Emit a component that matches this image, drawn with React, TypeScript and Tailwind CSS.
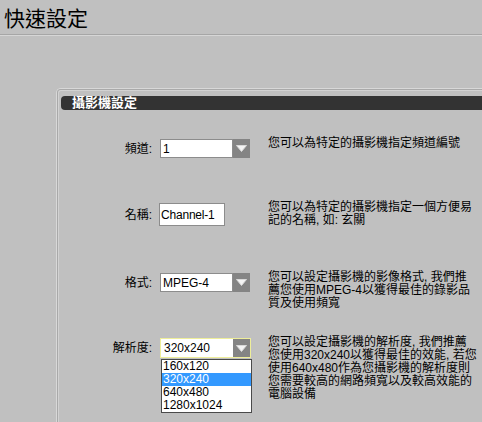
import React from "react";

const CJK = "font-['Liberation_Sans','Noto_Sans_CJK_TC',sans-serif]";

function Arrow() {
  return (
    <svg width="11" height="7" viewBox="0 0 11 7">
      <path d="M0.5 0.5 L10.5 0.5 L5.5 6.5 Z" fill="#f4f4f4" stroke="#d8d8d8" strokeWidth="1" />
    </svg>
  );
}

interface SelectBoxProps {
  value: string;
  focused?: boolean;
}

function SelectBox({ value, focused }: SelectBoxProps) {
  return (
    <div
      className={
        focused
          ? "flex h-[20px] w-[91px] border border-[#eeee9a]"
          : "flex h-[19px] w-[90px]"
      }
    >
      <div
        className={
          focused
            ? "flex flex-1 items-center bg-white pl-[3px] text-[12px] leading-[16px] text-black"
            : "flex flex-1 items-center border border-[#8c8c8c] bg-white pl-[2px] text-[12px] leading-[16px] text-black"
        }
      >
        {value}
      </div>
      <div className="flex w-[17px] items-center justify-center bg-[#848484]">
        <Arrow />
      </div>
    </div>
  );
}

interface RowProps {
  label: string;
  control: React.ReactNode;
  desc: React.ReactNode;
  height: string;
}

function Row({ label, control, desc, height }: RowProps) {
  return (
    <div className={`flex items-start ${height}`}>
      <div className="flex items-center">
        <span className="w-[94px] pr-[1px] text-right text-[12px] leading-[14px] text-black">
          {label}
        </span>
        <div className="ml-[7px] w-[92px]">{control}</div>
      </div>
      <p className="-mt-[2px] ml-[16px] whitespace-nowrap text-[12px] leading-[13px] text-black">
        {desc}
      </p>
    </div>
  );
}

const resolutions = ["160x120", "320x240", "640x480", "1280x1024"];

export default function App() {
  return (
    <div className={`h-[422px] w-[482px] overflow-hidden bg-[#c0c0c0] ${CJK}`}>
      <h1 className="h-[34px] pl-[4px] pt-[8px] text-[21px] leading-[22px] text-black">
        快速設定
      </h1>
      <div className="h-[2px] border-t border-b border-t-[#a6a6a6] border-b-[#d6d6d6]" />

      <div className="ml-[56px] mt-[52px] rounded-tl-[5px] border-l border-t border-[#d8d8d8]">
        <div className="rounded-tl-[4px] border-l border-t border-[#a9a9a9]">
          <div className="rounded-tl-[3px] border-l border-t border-[#d2d2d2] pb-[40px]">
            <div className="ml-[2px] mt-[5px] h-[14px] rounded-l-[4px] bg-[#333333] pl-[11px] text-[13px] font-bold leading-[14px] text-white">
              攝影機設定
            </div>

            <div className="mt-[29px]">
              <Row
                height="h-[64px]"
                label="頻道:"
                control={<SelectBox value="1" />}
                desc="您可以為特定的攝影機指定頻道編號"
              />
              <Row
                height="h-[70px]"
                label="名稱:"
                control={
                  <div className="-ml-[1px] flex h-[23px] w-[66px] items-center border border-[#8c8c8c] bg-white pl-[1px] text-[12px] tracking-[-0.2px] text-black">
                    Channel-1
                  </div>
                }
                desc={
                  <>
                    您可以為特定的攝影機指定一個方便易
                    <br />
                    記的名稱, 如: 玄關
                  </>
                }
              />
              <Row
                height="h-[65px]"
                label="格式:"
                control={<SelectBox value="MPEG-4" />}
                desc={
                  <>
                    您可以設定攝影機的影像格式, 我們推
                    <br />
                    薦您使用MPEG-4以獲得最佳的錄影品
                    <br />
                    質及使用頻寬
                  </>
                }
              />
              <Row
                height="h-[80px]"
                label="解析度:"
                control={
                  <div className="relative">
                    <SelectBox value="320x240" focused />
                    <ul className="absolute left-[1px] top-[21px] w-[91px] border border-[#4a4a4a] bg-white text-[12px] leading-[13px] text-black">
                      {resolutions.map((r) => (
                        <li
                          key={r}
                          className={
                            r === "320x240"
                              ? "h-[13px] bg-[#3399ff] pl-[1px] text-white"
                              : "h-[13px] pl-[1px]"
                          }
                        >
                          {r}
                        </li>
                      ))}
                    </ul>
                  </div>
                }
                desc={
                  <>
                    您可以設定攝影機的解析度, 我們推薦
                    <br />
                    您使用320x240以獲得最佳的效能, 若您
                    <br />
                    使用640x480作為您攝影機的解析度則
                    <br />
                    您需要較高的網路頻寬以及較高效能的
                    <br />
                    電腦設備
                  </>
                }
              />
            </div>
          </div>
        </div>
      </div>
    </div>
  );
}
